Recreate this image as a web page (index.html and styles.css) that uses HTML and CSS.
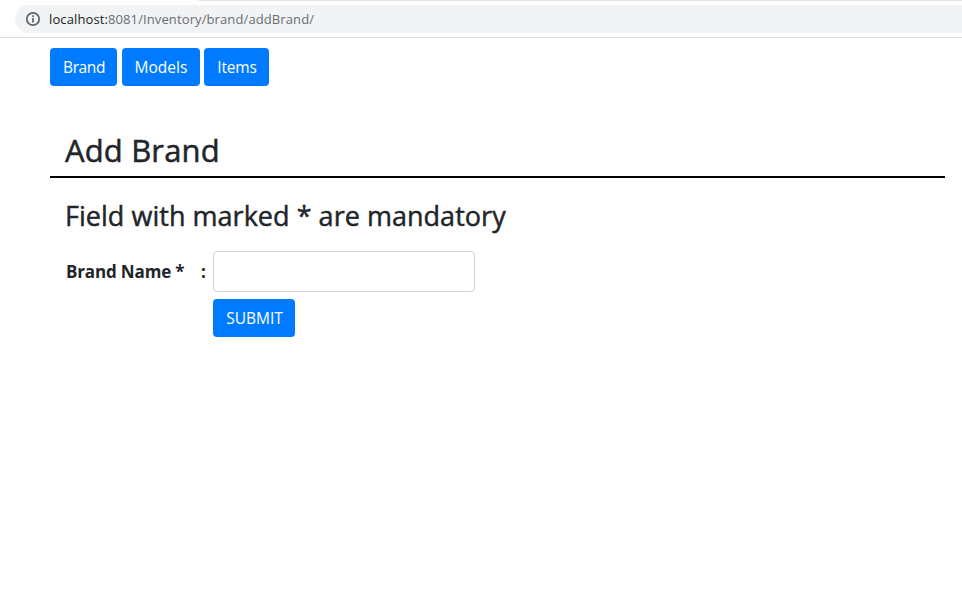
FILE: index.html
```html
<!DOCTYPE html>
<html lang="en">
<head>
<meta charset="utf-8">
<title>Add Brand</title>
<link rel="stylesheet" href="styles.css">
</head>
<body>
<div class="toolbar">
  <div class="address">
    <svg class="info" width="16" height="16" viewBox="0 0 16 16" aria-hidden="true"><circle cx="8" cy="8" r="6.2"/><path d="M8 7v4.5M8 4.3v1.7"/></svg>
    <span class="url"><span class="host">localhost:</span>8081/Inventory/brand/addBrand/</span>
  </div>
</div>
<main class="page">
  <nav class="nav">
    <button class="btn brand"><span>Brand</span></button>
    <button class="btn models"><span>Models</span></button>
    <button class="btn items"><span>Items</span></button>
  </nav>
  <h2 class="title"><span>Add Brand</span></h2>
  <form class="form">
    <h3 class="note"><span>Field with marked * are mandatory</span></h3>
    <div class="grid">
      <label class="label" for="name"><span>Brand Name *</span></label>
      <span class="colon">:</span>
      <input class="input" id="name" type="text">
      <button class="btn submit" type="button"><span>SUBMIT</span></button>
    </div>
  </form>
</main>
</body>
</html>
```
FILE: styles.css
```css
* { box-sizing: border-box; }
body { margin: 0; background: #fff; color: #212529; font-family: "Segoe UI", "Open Sans", "Noto Sans", sans-serif; font-size: 16px; }
.toolbar { height: 38px; padding: 5px 0 0 15px; border-bottom: 1px solid #dadce0; background: linear-gradient(#dee1e6, #dee1e6) 199px 0 / 100% 1px no-repeat; }
.address { height: 28px; display: flex; align-items: center; padding-left: 10px; background: #f1f3f4; border-radius: 14px 0 0 14px; }
.info { fill: none; stroke: #5f6368; stroke-width: 1.7; }
.url { margin-left: 8px; font-size: 13px; letter-spacing: .11px; color: #6a6e73; white-space: nowrap; }
.host { color: #202124; }
.page { padding: 10px 17px 0 50px; }
.nav { display: flex; }
.btn { height: 38px; padding: 0 0 0 1px; border: 0; border-radius: 4px; background: #007bff; color: #fff; font: 400 15.5px "Open Sans", sans-serif; white-space: nowrap; }
.brand { width: 67px; margin-right: 5px; letter-spacing: -.4px; }
.models { width: 78px; margin-right: 4px; padding: 0; }
.items { width: 65px; letter-spacing: -.2px; }
.title { height: 60px; margin: 32px 0 0; padding: 11px 15px 0; border-bottom: 2px solid #000; font-size: 31px; line-height: 42px; font-weight: 500; letter-spacing: .15px; white-space: nowrap; -webkit-text-stroke: .5px #212529; }
.form { padding: 0 15px; }
.note { margin: 20px 0 0; font-size: 27px; line-height: 36px; font-weight: 500; letter-spacing: .03px; white-space: nowrap; -webkit-text-stroke: .45px #212529; }
.grid { display: grid; grid-template-columns: 136px 12px 262px; grid-template-rows: 41px 38px; row-gap: 7px; margin-top: 17px; align-items: center; }
.label { padding-left: 1px; font-weight: 700; font-size: 17px; letter-spacing: -.15px; white-space: nowrap; }
.colon { font-weight: 700; font-size: 17px; }
.input { width: 262px; height: 41px; border: 1px solid #ced4da; border-radius: 4px; background: #fff; padding: 6px 12px; }
.submit { grid-column: 3; width: 82px; }
```
